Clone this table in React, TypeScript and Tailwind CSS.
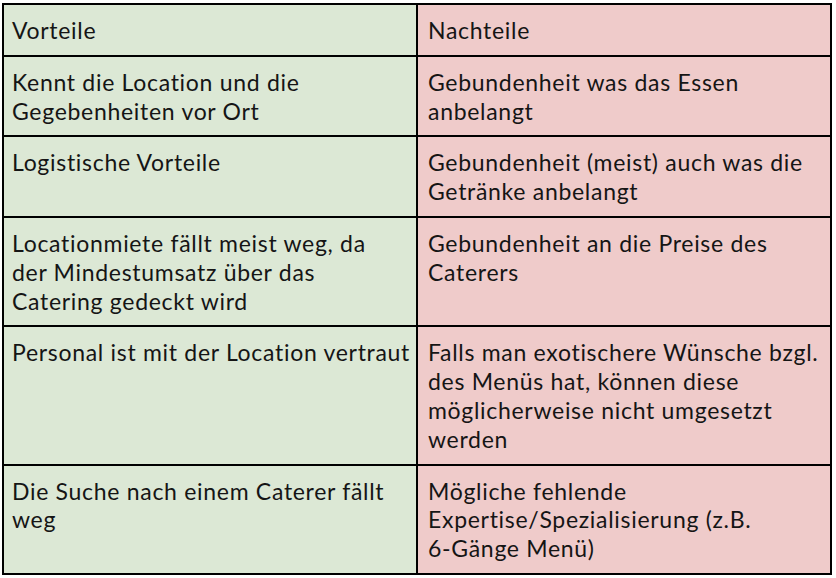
const rows: [string[], string[]][] = [
  [["Vorteile"], ["Nachteile"]],
  [
    ["Kennt die Location und die", "Gegebenheiten vor Ort"],
    ["Gebundenheit was das Essen", "anbelangt"],
  ],
  [["Logistische Vorteile"], ["Gebundenheit (meist) auch was die", "Getränke anbelangt"]],
  [
    ["Locationmiete fällt meist weg, da", "der Mindestumsatz über das", "Catering gedeckt wird"],
    ["Gebundenheit an die Preise des", "Caterers"],
  ],
  [
    ["Personal ist mit der Location vertraut"],
    ["Falls man exotischere Wünsche bzgl.", "des Menüs hat, können diese", "möglicherweise nicht umgesetzt", "werden"],
  ],
  [
    ["Die Suche nach einem Caterer fällt", "weg"],
    ["Mögliche fehlende", "Expertise/Spezialisierung (z.B.", "6-Gänge Menü)"],
  ],
];

function Lines({ lines }: { lines: string[] }) {
  return (
    <>
      {lines.map((l, i) => (
        <div key={i} className="whitespace-nowrap">
          {l}
        </div>
      ))}
    </>
  );
}

export default function App() {
  return (
    <div className="w-[836px] h-[578px] bg-white pl-[2px] pt-[3px]">
      <div
        className="w-[830px] border-2 border-black grid grid-cols-[414px_1fr] text-[23px] leading-[28.8px] tracking-[0.7px] text-[#151515]"
        style={{ fontFamily: "Lato, 'Open Sans', sans-serif" }}
      >
        {rows.map(([pro, con], i) => {
          const last = i === rows.length - 1;
          return (
            <div key={i} className="contents">
              <div
                className={`bg-[#dce8d5] border-r-2 border-black pl-[8px] pt-[11px] pb-[10px] ${
                  last ? "" : "border-b-2"
                }`}
              >
                <Lines lines={pro} />
              </div>
              <div
                className={`bg-[#efcbca] pl-[10px] pt-[11px] pb-[10px] ${last ? "" : "border-b-2 border-black"}`}
              >
                <Lines lines={con} />
              </div>
            </div>
          );
        })}
      </div>
    </div>
  );
}
